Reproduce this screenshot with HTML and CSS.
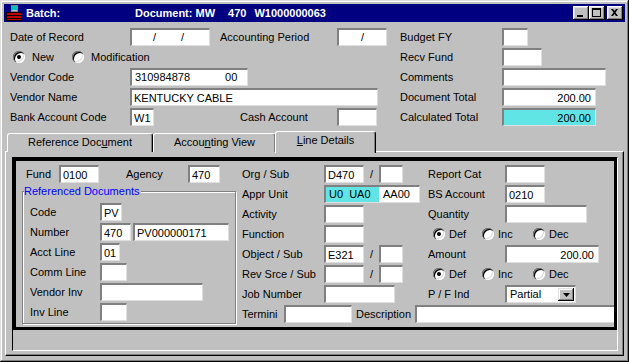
FILE: index.html
```html
<!DOCTYPE html>
<html lang="en">
<head>
  <meta charset="UTF-8">
  <title>Batch: Document MW 470 W1000000063</title>
  <link rel="stylesheet" href="styles.css">
</head>
<body>
  <div class="window">
    <div class="titlebar">
      <svg class="app-icon" width="16" height="16" viewBox="0 0 16 16">
        <rect x="0" y="7" width="16" height="9" fill="#000"/>
        <rect x="1" y="8" width="14" height="2" fill="#c00000"/>
        <rect x="1" y="11" width="6" height="2" fill="#c00000"/>
        <rect x="8" y="11" width="7" height="2" fill="#c00000"/>
        <rect x="1" y="14" width="14" height="1" fill="#c00000"/>
        <rect x="5" y="0" width="7" height="7" fill="#808080"/>
        <rect x="6" y="1" width="5" height="4" fill="#00c0c0"/>
        <rect x="6" y="5" width="5" height="1" fill="#c0c0c0"/>
      </svg>
      <span class="title-batch">Batch:</span>
      <span class="title-doc">Document: MW</span>
      <span class="title-doc agency">470</span>
      <span class="title-doc number">W1000000063</span>
      <div class="title-buttons">
        <button class="title-btn" title="Minimize">
          <svg width="16" height="14" viewBox="0 0 16 14"><rect x="4" y="9" width="6" height="2"/></svg>
        </button>
        <button class="title-btn" title="Maximize">
          <svg width="16" height="14" viewBox="0 0 16 14"><path fill-rule="evenodd" d="M3 2h9v9H3z M4 4v6h7V4z"/></svg>
        </button>
        <button class="title-btn close" title="Close">
          <svg width="16" height="14" viewBox="0 0 16 14"><path d="M4 3h2l1.5 2 1.5-2h2l-2.5 3.5 2.5 3.5h-2l-1.5-2-1.5 2h-2l2.5-3.5z"/></svg>
        </button>
      </div>
    </div>

    <div class="header-form">
      <label>Date of Record</label>
      <div class="field w80 date-field"><span class="slash first">/</span><span class="slash second">/</span></div>
      <label>Accounting Period</label>
      <div class="field w50 period-field"><span class="slash first">/</span></div>
      <label>Budget FY</label>
      <input class="field w26" type="text" value="">

      <div class="radio-group">
        <span class="radio new"><span class="radio-dot checked"></span>New</span>
        <span class="radio"><span class="radio-dot"></span>Modification</span>
      </div>
      <label class="col5">Recv Fund</label>
      <input class="field w40" type="text" value="">

      <label>Vendor Code</label>
      <div class="field w118 span2 vendor-code"><span>310984878</span><span class="suffix">00</span></div>
      <label class="col5">Comments</label>
      <input class="field w104" type="text" value="">

      <label>Vendor Name</label>
      <input class="field w248 span3" type="text" value="KENTUCKY CABLE">
      <label>Document Total</label>
      <input class="field w94 num" type="text" value="200.00">

      <label>Bank Account Code</label>
      <input class="field w24" type="text" value="W1">
      <label class="indent">Cash Account</label>
      <input class="field w40" type="text" value="">
      <label>Calculated Total</label>
      <input class="field w94 num dither" type="text" value="200.00">
    </div>

    <div class="tab-strip">
      <div class="tab ref">Reference Doc<u>u</u>ment</div>
      <div class="tab acct">Accou<u>n</u>ting View</div>
      <div class="tab line active"><u>L</u>ine Details</div>
    </div>

    <div class="tab-panel">
      <div class="tab-body">
        <div class="detail-frame">
          <div class="col-left">
            <div class="row fund-row">
              <label class="lbl-fund">Fund</label>
              <input class="field w40" type="text" value="0100">
              <label class="lbl-agency">Agency</label>
              <input class="field w32" type="text" value="470">
            </div>
            <fieldset class="ref-docs">
              <legend>Referenced Documents</legend>
              <div class="row"><label class="lbl-ref">Code</label><input class="field w22" type="text" value="PV"></div>
              <div class="row"><label class="lbl-ref">Number</label><input class="field w31" type="text" value="470"><input class="field w96 gap2" type="text" value="PV000000171"></div>
              <div class="row"><label class="lbl-ref">Acct Line</label><input class="field w20" type="text" value="01"></div>
              <div class="row"><label class="lbl-ref">Comm Line</label><input class="field w27" type="text" value=""></div>
              <div class="row"><label class="lbl-ref">Vendor Inv</label><input class="field w103" type="text" value=""></div>
              <div class="row"><label class="lbl-ref">Inv Line</label><input class="field w27" type="text" value=""></div>
            </fieldset>
          </div>

          <div class="col-main">
            <div class="col-main-top">
              <div class="col-mid">
                <div class="row"><label class="lbl-mid">Org / Sub</label><input class="field w40" type="text" value="D470"><span class="sep">/</span><input class="field w24" type="text" value=""></div>
                <div class="row"><label class="lbl-mid">Appr Unit</label><div class="field w96 appr"><span class="hl">U0  UA0</span><span class="rest">AA00</span></div></div>
                <div class="row"><label class="lbl-mid">Activity</label><input class="field w40" type="text" value=""></div>
                <div class="row"><label class="lbl-mid">Function</label><input class="field w40" type="text" value=""></div>
                <div class="row"><label class="lbl-mid">Object / Sub</label><input class="field w40" type="text" value="E321"><span class="sep">/</span><input class="field w24" type="text" value=""></div>
                <div class="row"><label class="lbl-mid">Rev Srce / Sub</label><input class="field w40" type="text" value=""><span class="sep">/</span><input class="field w24" type="text" value=""></div>
                <div class="row"><label class="lbl-mid">Job Number</label><input class="field w71" type="text" value=""></div>
              </div>
              <div class="col-right">
                <div class="row"><label class="lbl-right">Report Cat</label><input class="field w40" type="text" value=""></div>
                <div class="row"><label class="lbl-right">BS Account</label><input class="field w40" type="text" value="0210"></div>
                <div class="row"><label class="lbl-right">Quantity</label><input class="field w82" type="text" value=""></div>
                <div class="row radio-row">
                  <span class="radio def"><span class="radio-dot checked"></span>Def</span>
                  <span class="radio inc"><span class="radio-dot"></span>Inc</span>
                  <span class="radio"><span class="radio-dot"></span>Dec</span>
                </div>
                <div class="row"><label class="lbl-right">Amount</label><input class="field w94 num" type="text" value="200.00"></div>
                <div class="row radio-row">
                  <span class="radio def"><span class="radio-dot checked"></span>Def</span>
                  <span class="radio inc"><span class="radio-dot"></span>Inc</span>
                  <span class="radio"><span class="radio-dot"></span>Dec</span>
                </div>
                <div class="row">
                  <label class="lbl-right">P / F Ind</label>
                  <div class="field w71 select-field">
                    <span>Partial</span>
                    <span class="drop-btn">
                      <svg width="7" height="4" viewBox="0 0 7 4"><path d="M0 0h7L3.5 4z"/></svg>
                    </span>
                  </div>
                </div>
              </div>
            </div>
            <div class="row termini-row">
              <label class="lbl-termini">Termini</label>
              <input class="field w68" type="text" value="">
              <label class="lbl-desc">Description</label>
              <input class="field desc" type="text" value="">
            </div>
          </div>
        </div>
        <div class="status-strip"></div>
      </div>
    </div>
  </div>
</body>
</html>
```

FILE: styles.css
```css
/* Win95 style reset */
* {
  margin: 0;
  padding: 0;
  box-sizing: border-box;
  font-family: "Liberation Sans", Arial, sans-serif;
  font-size: 11px;
}

body {
  background: #c0c0c0;
  width: 629px;
  height: 362px;
  overflow: hidden;
  color: #000;
}

.window {
  width: 629px;
  height: 362px;
  padding: 4px;
  background: #c0c0c0;
  display: flex;
  flex-direction: column;
  box-shadow: inset -1px -1px #000, inset 1px 1px #dfdfdf,
              inset -2px -2px #808080, inset 2px 2px #fff;
}

/* Title bar */
.titlebar {
  height: 18px;
  background: #000080;
  color: #fff;
  display: flex;
  align-items: center;
  padding: 0 2px;
}

.titlebar span {
  font-weight: bold;
  white-space: pre;
}

.app-icon {
  margin-right: 4px;
  flex-shrink: 0;
}

.title-batch {
  width: 109px;
}

.title-doc.agency {
  margin-left: 13px;
}

.title-doc.number {
  margin-left: 8px;
}

.title-buttons {
  margin-left: auto;
  display: flex;
}

.title-btn {
  width: 16px;
  height: 14px;
  border: none;
  background: #c0c0c0;
  display: block;
  box-shadow: inset -1px -1px #000, inset 1px 1px #fff,
              inset -2px -2px #808080, inset 2px 2px #dfdfdf;
}

.title-btn svg {
  display: block;
  fill: #000;
}

.title-btn.close {
  margin-left: 2px;
}

/* Fields */
.field {
  height: 18px;
  background: #fff;
  border-top: 2px solid #808080;
  border-left: 2px solid #808080;
  border-right: 1px solid #dfdfdf;
  border-bottom: 1px solid #dfdfdf;
  padding: 0 2px;
  line-height: 15px;
  color: #000;
  outline: none;
  flex-shrink: 0;
}

.field.num {
  text-align: right;
  padding-right: 4px;
}

/* dithered cyan highlight */
.field.dither {
  background: #60e4e4;
}

.w20 { width: 20px; }
.w22 { width: 22px; }
.w24 { width: 24px; }
.w26 { width: 26px; }
.w27 { width: 27px; }
.w31 { width: 31px; }
.w32 { width: 32px; }
.w40 { width: 40px; }
.w50 { width: 50px; }
.w68 { width: 68px; }
.w71 { width: 71px; }
.w80 { width: 80px; }
.w82 { width: 82px; }
.w94 { width: 94px; }
.w96 { width: 96px; }
.w103 { width: 103px; }
.w104 { width: 104px; }
.w118 { width: 118px; }
.w248 { width: 248px; }

.gap2 { margin-left: 2px; }

.date-field,
.period-field,
.vendor-code {
  display: flex;
  align-items: center;
}

.date-field .slash.first { margin-left: 19px; }
.date-field .slash.second { margin-left: 25px; }
.period-field .slash.first { margin-left: 20px; }

.vendor-code {
  padding-left: 3px;
}

.vendor-code .suffix {
  margin-left: 35px;
}

/* Header form */
.header-form {
  display: grid;
  grid-template-columns: 120px 90px 117px 63px 102px 1fr;
  grid-auto-rows: 20px;
  align-items: center;
  padding: 5px 0 0 6px;
}

.header-form .span2 { grid-column: span 2; }
.header-form .span3 { grid-column: span 3; }
.header-form .col5 { grid-column: 5; }
.header-form .indent { padding-left: 20px; }

.radio-group {
  grid-column: 1 / 3;
  display: flex;
  padding-left: 3px;
}

.radio {
  display: inline-flex;
  align-items: center;
}

.radio-dot {
  width: 12px;
  height: 12px;
  border-radius: 50%;
  background: #fff;
  margin-right: 7px;
  position: relative;
  box-shadow: inset 1px 1px #808080, inset 2px 2px #000,
              inset -1px -1px #fff, inset -2px -2px #dfdfdf;
}

.radio-dot.checked::after {
  content: "";
  position: absolute;
  left: 4px;
  top: 4px;
  width: 4px;
  height: 4px;
  border-radius: 50%;
  background: #000;
}

.radio.new {
  width: 59px;
}

/* Tabs */
.tab-strip {
  display: flex;
  height: 21px;
  margin-top: 4px;
  padding-left: 3px;
  position: relative;
  z-index: 1;
}

.tab {
  height: 19px;
  margin-top: 2px;
  border-top: 1px solid #fff;
  border-left: 1px solid #fff;
  border-right: 1px solid #000;
  border-radius: 3px 3px 0 0;
  box-shadow: inset -1px 0 #808080;
  text-align: center;
  line-height: 17px;
  background: #c0c0c0;
}

.tab.ref { width: 146px; }
.tab.acct { width: 123px; }

.tab.active {
  width: 101px;
  height: 22px;
  margin-top: 0;
  margin-left: -1px;
}

.tab-panel {
  flex: 1;
  display: flex;
  margin: -1px 1px 2px 1px;
  padding: 5px 5px 4px 6px;
  border-top: 1px solid #fff;
  border-left: 1px solid #fff;
  border-right: 1px solid #000;
  border-bottom: 1px solid #000;
  box-shadow: inset -1px -1px #808080;
}

.tab-body {
  flex: 1;
  display: flex;
  flex-direction: column;
  border-top: 1px solid #000;
  border-left: 1px solid #000;
  border-right: 1px solid #fff;
  border-bottom: 1px solid #fff;
}

.detail-frame {
  height: 172px;
  border: 3px solid #000;
  display: flex;
  padding: 3px 0 0 6px;
  overflow: hidden;
}

.status-strip {
  flex: 1;
}

.row {
  height: 20px;
  display: flex;
  align-items: center;
}

/* Line details columns */
.col-left {
  width: 218px;
  flex-shrink: 0;
}

.fund-row {
  padding-left: 4px;
}

.lbl-fund { width: 33px; }
.lbl-agency { width: 62px; margin-left: 27px; }

.ref-docs {
  width: 214px;
  margin-top: 1px;
  padding: 4px 0 1px 7px;
  border: 1px solid #808080;
  box-shadow: inset 1px 1px #fff, 1px 1px #fff;
}

.ref-docs legend {
  color: #0000ff;
  padding: 0 1px 0 0;
  margin-left: -6px;
  line-height: 13px;
  background: #c0c0c0;
}

.lbl-ref { width: 70px; }

.col-main {
  flex: 1;
  margin-left: 2px;
  display: flex;
  flex-direction: column;
}

.col-main-top {
  display: flex;
}

.col-mid {
  width: 186px;
}

.lbl-mid { width: 82px; }

.sep {
  width: 15px;
  text-align: center;
}

.appr {
  display: flex;
  padding: 0;
  white-space: pre;
}

.appr .hl {
  width: 53px;
  padding-left: 3px;
  background: #60e4e4;
}

.appr .rest {
  margin-left: 4px;
}

.col-right {
  flex: 1;
}

.lbl-right { width: 77px; }

.radio-row {
  padding-left: 5px;
}

.radio-row .radio-dot {
  margin-right: 4px;
}

.radio-row .radio.def { width: 49px; }
.radio-row .radio.inc { width: 51px; }

.select-field {
  display: flex;
  align-items: center;
  justify-content: space-between;
  padding: 0 1px 0 3px;
}

.drop-btn {
  width: 16px;
  height: 13px;
  background: #c0c0c0;
  display: flex;
  align-items: center;
  justify-content: center;
  box-shadow: inset -1px -1px #000, inset 1px 1px #dfdfdf,
              inset -2px -2px #808080, inset 2px 2px #fff;
}

.termini-row .lbl-termini { width: 42px; }
.termini-row .lbl-desc { width: 59px; margin-left: 4px; }

.field.desc {
  flex: 1;
  border-right: none;
}
```
